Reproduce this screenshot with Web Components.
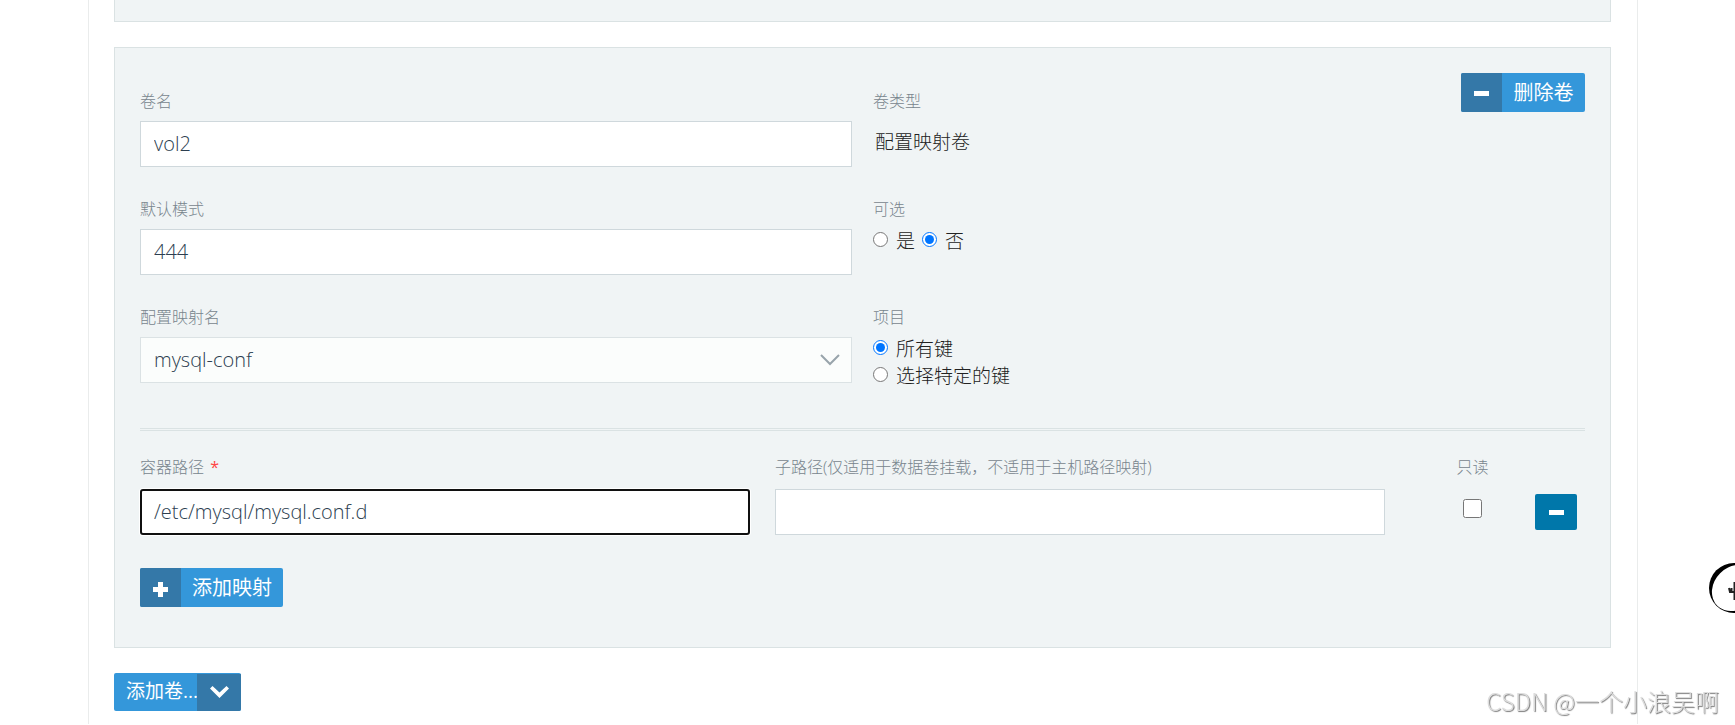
<!DOCTYPE html>
<html lang="zh-CN">
<head>
<meta charset="utf-8">
<title>卷配置</title>
<style>
body { margin: 0; background: #fff; color: #222; font: 300 19px/27px "Open Sans", "Noto Sans CJK SC", sans-serif; }
</style>
</head>
<body>
<volume-page></volume-page>
<script>
const define = (name, html, setup) => {
  const template = document.createElement('template');
  template.innerHTML = '<style>*{box-sizing:border-box}</style>' + html;
  customElements.define(name, class extends HTMLElement {
    constructor() {
      super();
      this.attachShadow({ mode: 'open' }).append(template.content.cloneNode(true));
    }
    connectedCallback() { if (setup) setup(this, this.shadowRoot); }
  });
};

const icons = {
  minus: '<path d="M4 8h15v5H4z"/>',
  plus: '<path d="M9 4h5v5h5v5h-5v5H9v-5H4V9h5z"/>',
  down: '<path d="M2 7.500l2.500-2.500 7 6.500 7-6.500L21 7.500 11.500 17z"/>'
};

define('app-icon', `
  <style>:host{display:block;width:23px;height:23px} svg{display:block;fill:#fff}</style>
  <svg width="23" height="23" viewBox="0 0 23 23" aria-hidden="true"></svg>`,
  (host, root) => { root.querySelector('svg').innerHTML = icons[host.getAttribute('name')]; });

define('icon-button', `
  <style>
    :host{display:block}
    button{display:flex;align-items:stretch;min-width:124px;height:39px;padding:0;border:0;border-radius:2px;overflow:hidden;background:#3497da;color:#fff;font:inherit;font-weight:400;font-size:20px;line-height:39px}
    .icon{display:flex;align-items:center;justify-content:center;width:41px;padding-top:4px;background:#3478a8}
    .text{flex:1;padding:0 11px}
  </style>
  <button type="button"><span class="icon"><app-icon></app-icon></span><span class="text"><slot></slot></span></button>`,
  (host, root) => {
    const icon = document.createElement('app-icon');
    icon.setAttribute('name', host.getAttribute('icon'));
    root.querySelector('app-icon').replaceWith(icon);
  });

define('remove-button', `
  <style>
    :host{display:block}
    button{display:flex;align-items:center;justify-content:center;width:42px;height:36px;padding:2px 0 0;border:0;border-radius:2px;background:#0077aa}
  </style>
  <button type="button" aria-label="删除映射"><app-icon name="minus"></app-icon></button>`);

define('split-button', `
  <style>
    :host{display:inline-block}
    button{display:flex;height:38px;padding:0;border:0;border-radius:2px;overflow:hidden;background:#3497da;color:#fff;font:inherit;font-weight:400;line-height:36px}
    .text{width:83px;padding-left:12px;text-align:left;white-space:nowrap;overflow:hidden}
    .icon{display:flex;align-items:center;justify-content:center;width:44px;margin-top:1px;background:#3478a8}
  </style>
  <button type="button"><span class="text"><slot></slot></span><span class="icon"><app-icon name="down"></app-icon></span></button>`);

const labelCss = 'label,.label{display:block;font-size:16px;line-height:24px;color:#78858d}';
const boxCss = 'display:block;width:100%;height:46px;margin:0;padding:0 13px 2px;border:1px solid #cfd8dc;border-radius:0;background:#fff;color:#2c3e50;font:inherit;font-size:20px;outline:0';

define('text-field', `
  <style>
    :host{display:block} ${labelCss}
    label{margin-bottom:8px}
    :host([roomy]) label{margin-bottom:10px}
    .req{color:#f44;margin-left:2px;display:none;font-weight:400}
    :host([required]) .req{display:inline}
    input{${boxCss}}
    :host([active]) input{border:2px solid #101010;border-radius:3px;padding:0 12px 2px;box-shadow:0 0 0 1px #fff}
  </style>
  <label for="box"><slot></slot><span class="req">*</span></label>
  <input id="box" type="text">`,
  (host, root) => { root.querySelector('input').value = host.getAttribute('value') || ''; });

define('select-field', `
  <style>
    :host{display:block} ${labelCss}
    label{margin-bottom:8px}
    .wrap{display:grid;align-items:center}
    .wrap>*{grid-area:1/1}
    select{${boxCss};appearance:none;border-color:#dbe2e4;background:#fbfdfc}
    svg{justify-self:end;margin-right:12px;pointer-events:none}
  </style>
  <label for="box"><slot></slot></label>
  <div class="wrap"><select id="box"></select>
  <svg width="20" height="12" viewBox="0 0 20 12" fill="none" stroke="#98a4ab" stroke-width="2" aria-hidden="true"><path d="M1 1l9 9 9-9"/></svg></div>`,
  (host, root) => { root.querySelector('select').add(new Option(host.getAttribute('value'))); });

define('static-field', `
  <style>:host{display:block} ${labelCss} .label{margin-bottom:8px} .value{padding:8px 2px}</style>
  <div class="label"><slot name="label"></slot></div>
  <div class="value"><slot></slot></div>`);

define('radio-group', `
  <style>
    :host{display:block} ${labelCss}
    .options{display:flex;gap:7px;padding-top:7px}
    :host([stacked]) .options{flex-direction:column;gap:0}
    .options label{display:flex;align-items:flex-start;font-size:19px;line-height:27px;color:inherit}
    input{width:15px;height:15px;margin:4px 8px 0 0;accent-color:#0075ff}
  </style>
  <div class="label" id="caption"><slot></slot></div>
  <div class="options" role="radiogroup" aria-labelledby="caption"></div>`,
  (host, root) => {
    const box = root.querySelector('.options');
    host.getAttribute('options').split(',').forEach((text, i) => {
      const label = document.createElement('label');
      const input = document.createElement('input');
      input.type = 'radio';
      input.name = 'choice';
      input.checked = i === Number(host.getAttribute('selected'));
      label.append(input, text);
      box.append(label);
    });
  });

define('check-field', `
  <style>
    :host{display:flex;flex-direction:column;align-items:center} ${labelCss}
    input{width:19px;height:19px;margin:20px 0 0}
  </style>
  <label for="box"><slot></slot></label><input id="box" type="checkbox">`);

define('volume-panel', `
  <style>
    :host{display:block;padding:25px;border:1px solid #dae2e3;background:#f0f4f5}
  </style><slot></slot>`);

define('mount-row', `
  <style>
    :host{display:grid;grid-template-columns:minmax(0,1fr) minmax(0,1fr) 125px 50px;padding:24px 0 33px}
    text-field{margin-right:25px}
    remove-button{padding-top:39px}
  </style>
  <text-field roomy required active value="/etc/mysql/mysql.conf.d">容器路径 </text-field>
  <text-field roomy>子路径(仅适用于数据卷挂载，不适用于主机路径映射)</text-field>
  <check-field>只读</check-field>
  <remove-button></remove-button>`);

define('volume-editor', `
  <style>
    :host{display:block;position:relative;padding-bottom:15px}
    .fields{display:grid;grid-template-columns:1fr 1fr;column-gap:21px;row-gap:30px;padding:16px 0 38px}
    .delete{position:absolute;top:0;right:0}
    hr{margin:0;border:0;border-top:3px double #dae2e3}
  </style>
  <icon-button class="delete" icon="minus">删除卷</icon-button>
  <div class="fields">
    <text-field value="vol2">卷名</text-field>
    <static-field><span slot="label">卷类型</span>配置映射卷</static-field>
    <text-field value="444">默认模式</text-field>
    <radio-group options="是,否" selected="1">可选</radio-group>
    <select-field value="mysql-conf">配置映射名</select-field>
    <radio-group stacked options="所有键,选择特定的键" selected="0">项目</radio-group>
  </div>
  <hr>
  <mount-row></mount-row>
  <icon-button icon="plus">添加映射</icon-button>`);

define('float-badge', `
  <style>:host{display:block;position:fixed;right:0;top:563px} svg{display:block}</style>
  <svg width="26" height="50" viewBox="0 0 26 50" aria-hidden="true">
    <circle cx="25" cy="25" r="25" fill="#000"/><ellipse cx="26" cy="25" rx="25" ry="21" transform="rotate(-45 26 25)" fill="#fff"/>
    <path d="M20 25l1 4h5M22.500 25v3M25.500 19v18" fill="none" stroke="#222" stroke-width="2"/>
  </svg>`);

define('water-mark', `
  <style>:host{display:block;position:fixed;right:16px;bottom:6px;color:#ddd;font:300 24px/36px "Noto Sans CJK SC",sans-serif;text-shadow:1px 1px 1px #777}</style><slot></slot>`);

define('volume-page', `
  <style>
    :host{display:block}
    main{margin:0 97px 0 88px;padding:0 26px 13px 25px;border:solid #eaecec;border-width:0 1px}
    .previous{padding:0;height:22px;border-top:0}
    .current{margin:25px 0}
    split-button{display:block}
  </style>
  <main>
    <volume-panel class="previous"></volume-panel>
    <volume-panel class="current"><volume-editor></volume-editor></volume-panel>
    <split-button>添加卷...</split-button>
  </main>
  <float-badge></float-badge>
  <water-mark>CSDN @一个小浪吴啊</water-mark>`);
</script>
</body>
</html>
